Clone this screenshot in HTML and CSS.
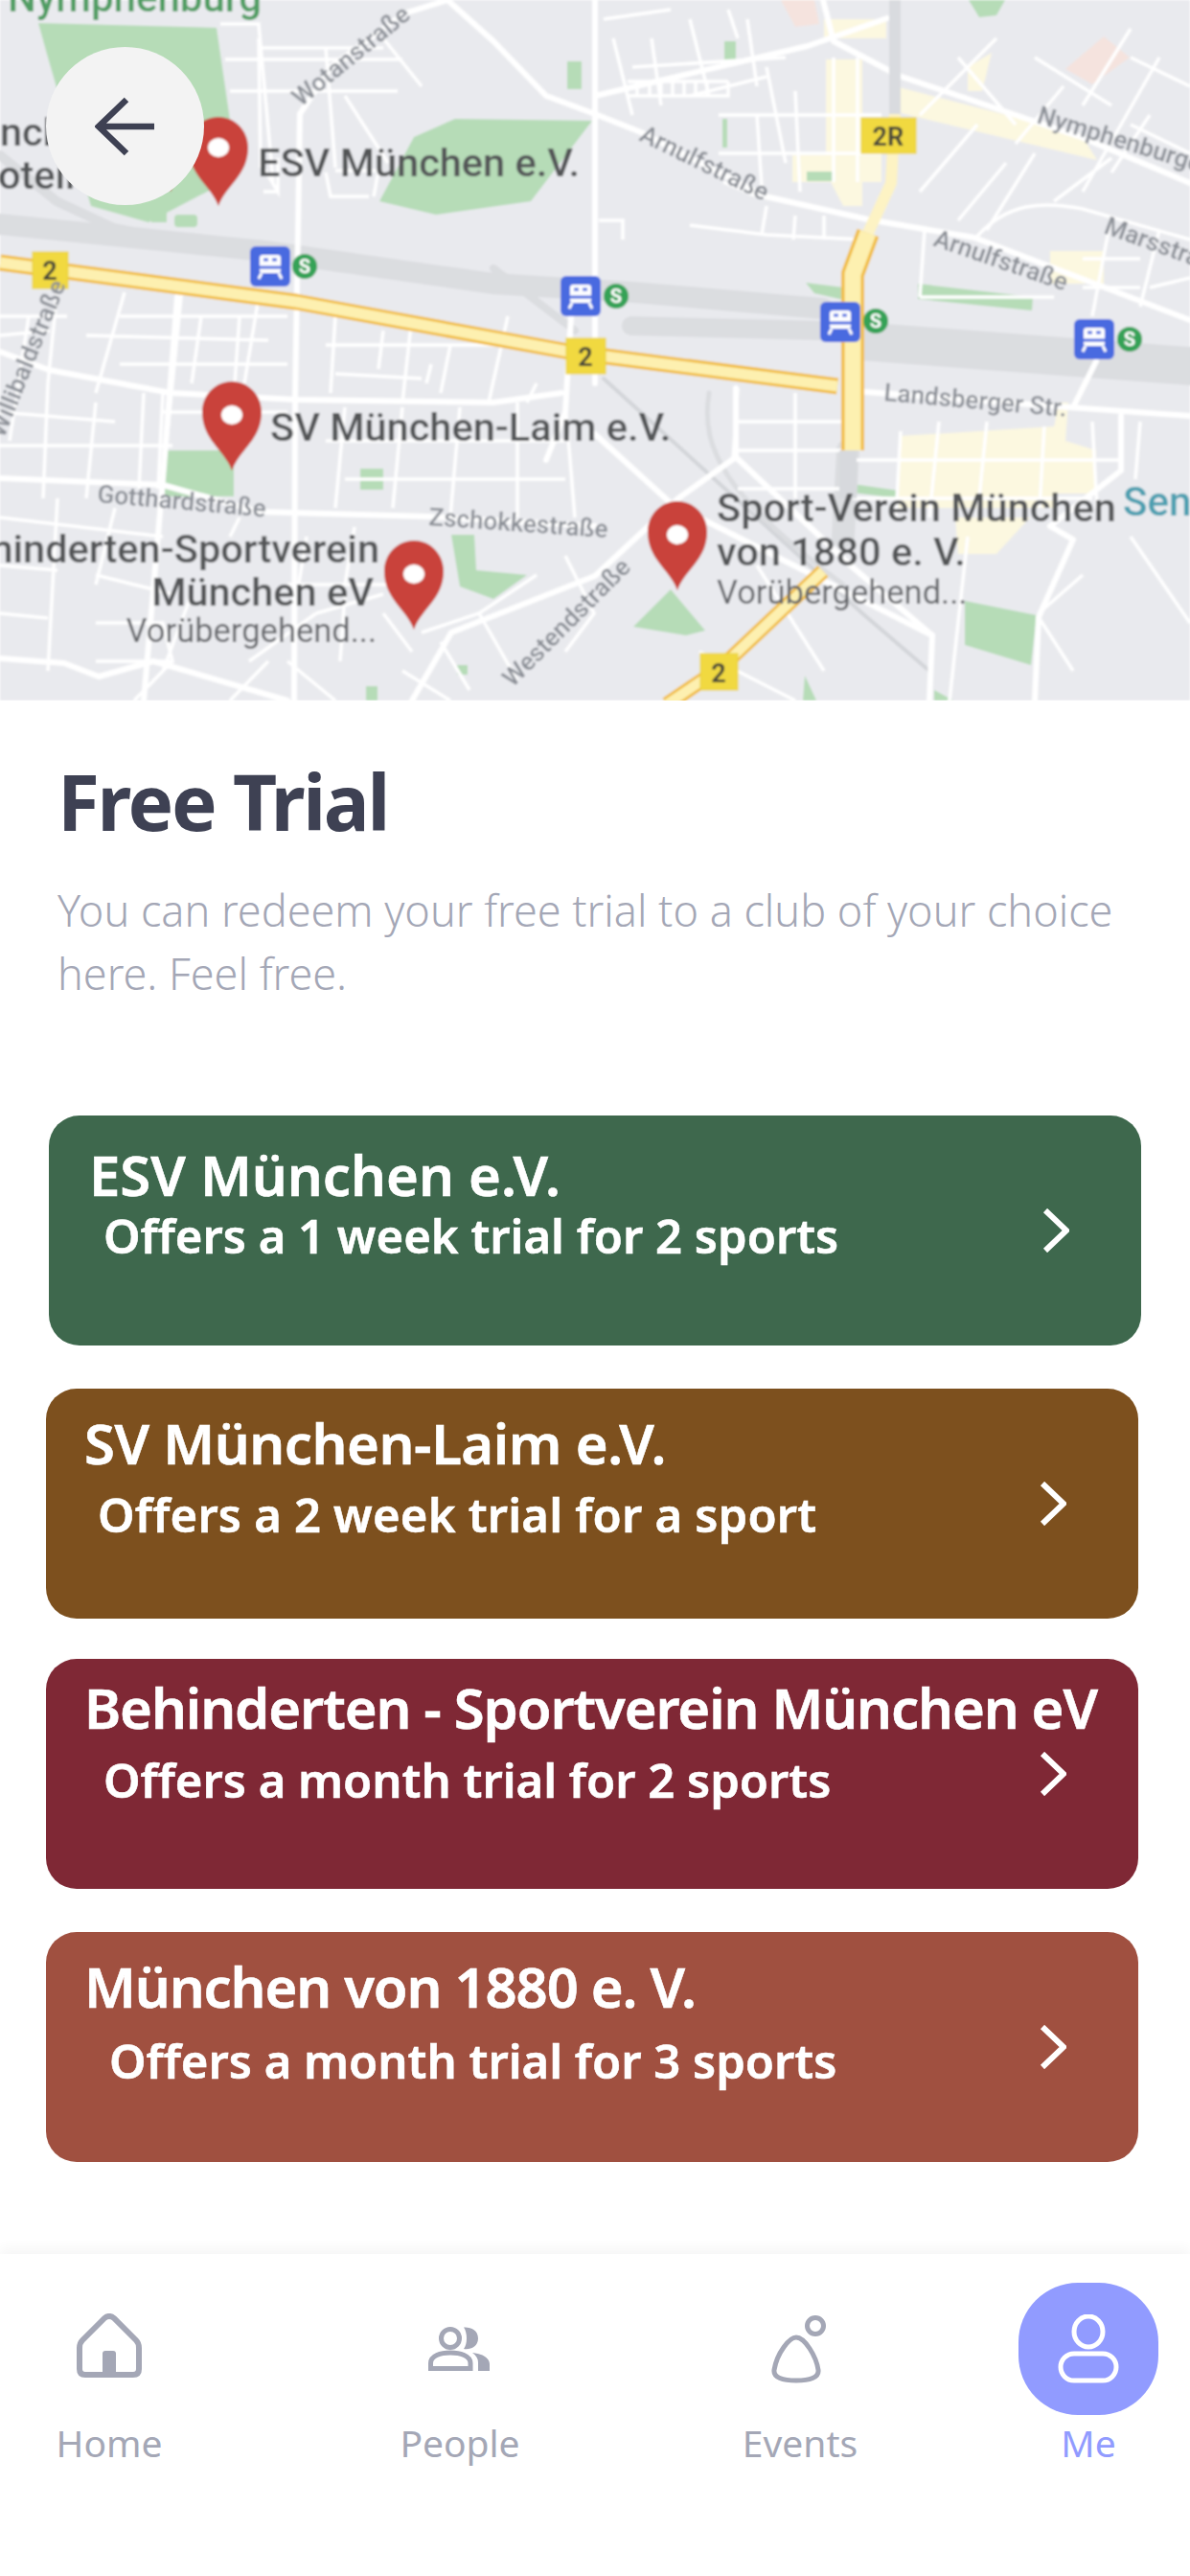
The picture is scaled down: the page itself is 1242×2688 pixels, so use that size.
FILE: index.html
```html
<!DOCTYPE html>
<html lang="en">
<head>
<meta charset="utf-8">
<title>Free Trial</title>
<link rel="stylesheet" href="styles.css">
</head>
<body>
<div class="page">
  <section class="map">
    <svg class="map-svg" viewBox="0 0 1242 731" width="1242" height="731" xmlns="http://www.w3.org/2000/svg">
      <defs>
        <filter id="soft" x="-2%" y="-2%" width="104%" height="104%"><feGaussianBlur stdDeviation="1.300"/></filter>
        <path id="pin" d="M0 0C-8 -22 -31 -32 -31 -61C-31 -79 -17 -93 0 -93C17 -93 31 -79 31 -61C31 -32 8 -22 0 0Z"/>
      </defs>
      <g filter="url(#soft)">
        <rect width="1242" height="731" fill="#e9eaee"/>
        <!-- special areas -->
        <g fill="#fcf8e0">
          <path d="M938 91L1128 140L1145 167L940 118Z"/>
          <path d="M862 62H900V215H880L862 180Z"/>
          <path d="M827 162H920V190H827Z"/>
          <path d="M860 20H925V40H860Z"/>
          <path d="M1096 262H1152V296H1096Z"/>
          <path d="M938 455L1100 445L1105 420L1115 420L1112 460L1144 470V515H1100V530H938Z"/>
          <path d="M997 540H1075L1040 578H1000Z"/>
          <path d="M1010 70L1035 55L1025 95H1010Z"/>
        </g>
        <g fill="#f5e3de">
          <path d="M815 0H850L855 25L830 28Z"/>
          <path d="M1112 72L1152 38L1179 60L1140 88Z"/>
        </g>
        <g fill="#b6dcb7">
          <path d="M40 24L226 29L240 125L235 190L155 232L95 215L50 60Z"/>
          <rect x="158" y="210" width="16" height="22"/>
          <rect x="182" y="224" width="24" height="13" rx="4"/>
          <path d="M396 210L432 143L475 124L618 126L554 210L455 224Z"/>
          <rect x="592" y="64" width="15" height="29"/>
          <rect x="172" y="470" width="72" height="48"/>
          <rect x="376" y="489" width="24" height="22"/>
          <path d="M471 558H495L497 595L550 600L515 625L480 612Z"/>
          <rect x="477" y="694" width="11" height="10"/>
          <rect x="382" y="716" width="12" height="15"/>
          <rect x="756" y="43" width="12" height="25"/>
          <rect x="754" y="124" width="5" height="30"/>
          <rect x="842" y="179" width="28" height="10"/>
          <path d="M841 295L881 300V313L850 306Z"/>
          <path d="M958 296L1078 310L1077 324L958 312Z"/>
          <path d="M1007 627L1082 642L1076 694L1007 673Z"/>
          <path d="M700 615L736 658L716 663L661 654Z"/>
          <path d="M890 505L938 512V520L890 514Z"/>
          <path d="M1011 0H1049L1040 16L1022 18Z"/>
          <path d="M840 705L852 731H838Z"/>
          <path d="M975 720L995 731H975Z"/>
        </g>
        <!-- rail -->
        <g fill="none" stroke="#dbdde0" stroke-linecap="round">
          <path d="M0 234L277 262L515 296L661 305L859 322" stroke-width="22"/>
          <path d="M0 162L59 210L119 238L277 268" stroke-width="10"/>
          <path d="M659 340L859 345" stroke-width="20"/>
          <path d="M898 356L1242 382" stroke-width="40"/>
          <path d="M515 280L600 345" stroke-width="8"/>
          <path d="M630 395L900 640L970 700" stroke-width="4" stroke="#d3d5d9"/>
          <path d="M740 410C730 470 760 520 880 610" stroke-width="5"/>
          <path d="M885 470L880 560" stroke-width="24"/>
        </g>
        <!-- thin grid -->
        <g fill="none" stroke="#fff" stroke-width="3.500">
          <path d="M230 25L270 25L285 190M270 50H400M235 62H420M240 95H415M270 40L272 175M340 50L350 175M400 40L440 90M360 100L405 170M350 178H395L390 205M275 175L290 200V165M290 200H275M340 180L345 205H385"/>
          <path d="M0 330H70M0 350L52 345M60 300L50 400M30 330L10 460M130 305L100 410M190 300L170 500M125 330H300M125 380H300M90 350L280 355M210 330L200 400M250 330L245 400M270 310L255 400"/>
          <path d="M350 330L345 410M430 330L420 420M530 330L510 420M340 360H590M350 390L440 395M400 345L395 385M470 360L460 410M560 400L550 420M450 380L445 400"/>
          <path d="M0 430L120 440M0 465H180M50 400L45 520M100 420L90 520M150 410L145 510M240 420L230 470M300 430H170M170 410L165 510M360 425L350 530M420 425L410 530M480 425L470 540M340 460H590M360 500H590M540 420V540M590 420L600 540"/>
          <path d="M0 540L170 560M0 590L60 595M60 520L50 700M120 530L100 610M100 600L180 620M250 540L240 560M200 620L170 700M0 640L50 645M100 650H170L180 690L100 690M260 690L330 640M330 640L400 620M320 560L310 620M370 550L360 610M300 610H430M360 620L355 690M400 640L430 680M300 690L350 731M140 731L180 690M240 731L280 690M440 660L500 640L560 600M500 640L540 710M460 670L490 720M420 700L470 731M590 580L620 640L590 680"/>
          <path d="M630 20L700 10M640 40L660 120M680 40L690 110M720 20L740 100M780 20L790 90M760 10L770 40M660 70L820 60M800 70L820 170M720 100L800 80"/>
          <path d="M655 85H760M655 100H760V85M665 85V100M678 85V100M690 85V100M702 85V100M714 85V100M726 85V100M738 85V100"/>
          <path d="M750 120H920M750 160H920M790 120L795 195M830 95L835 200M870 60V190M895 60V190M755 190L790 205M720 235L800 245L900 250M800 215L795 245M830 225L828 250M860 225V250M625 230H650V250"/>
          <path d="M960 120L1040 40M1000 60L1060 130M1080 60L1160 110M1110 90L1060 150M960 200L1020 130M1050 170L1000 230M1080 160L1030 240M1130 110L1180 30M1180 60L1242 90M1180 130L1242 160M1200 120L1160 180M1130 200L1210 60M1100 210L1160 165"/>
          <path d="M1017 250C1050 210 1090 210 1130 218L1242 250M1160 225L1140 330M1210 240L1190 320M1130 270H1190M1130 300H1190M965 240L960 310M960 310H1100"/>
          <path d="M770 440H890M770 470H890M770 510H890M830 410V520M770 405L765 480M890 480H940M940 450L935 540M980 440L970 540M1030 440L1020 540M1090 445L1085 530M1140 440L1145 530M1190 440L1185 500M940 480H1170M940 520H1140M890 520H1000"/>
          <path d="M1180 560L1242 650M1130 600L1084 640M990 740L1010 560"/>
          <path d="M1200 300L1242 290M1084 644L1120 700M730 680L830 731M790 590L860 700"/>
        </g>
        <!-- main roads -->
        <g fill="none" stroke="#fff" stroke-width="6" stroke-linejoin="round" stroke-linecap="round">
          <path d="M307 731L308 415L311 240L313 119L345 70L422 14L467 0L515 43L570 100L621 119"/>
          <path d="M0 367L51 386L178 410L309 417L515 420L586 410"/>
          <path d="M0 499L170 506L270 534L447 539L621 549"/>
          <path d="M0 687L67 692L103 706M103 706L160 690L300 731"/>
          <path d="M185 310L170 500L150 731"/>
          <path d="M596 330L590 430L570 480"/>
          <path d="M621 119L669 138L799 205L906 229L1017 248L1242 334"/>
          <path d="M621 100L843 48L926 19"/>
          <path d="M859 0L870 43L938 79L1128 143L1242 191"/>
          <path d="M890 408L1116 425L1242 434"/>
          <path d="M1144 377L1120 425M1170 434V491L1096 549"/>
          <path d="M621 453L700 525L973 663L970 731"/>
          <path d="M768 405V477L708 520L621 601L471 660L430 731"/>
          <path d="M768 477L890 592L973 663"/>
          <path d="M1084 644L1120 563L1096 549M1084 644L1080 731"/>
          <path d="M621 0V400"/>
        </g>
        <!-- motorway -->
        <g fill="none" stroke-linejoin="round" stroke-linecap="butt">
          <path d="M0 274L309 315L594 367L874 403" stroke="#f1bd42" stroke-width="17"/>
          <path d="M890 470L890 286L906 243" stroke="#f1bd42" stroke-width="24"/>
          <path d="M859 596L752 697L696 735" stroke="#f1bd42" stroke-width="16"/>
          <path d="M0 274L309 315L594 367L874 403" stroke="#fdf0b0" stroke-width="11"/>
          <path d="M890 470L890 286L906 243" stroke="#fdf0b0" stroke-width="17"/>
          <path d="M906 243L930 191L934 119" stroke="#fdf3c4" stroke-width="12"/>
          <path d="M859 596L752 697L696 735" stroke="#fdf0b0" stroke-width="10"/>
          <path d="M934 119V0" stroke="#d9dbdf" stroke-width="12"/>
          <path d="M885 470V520" stroke="#d7d9dd" stroke-width="18"/>
        </g>
        <!-- shields -->
        <g class="shield">
          <rect x="34" y="263" width="37" height="38"/>
          <rect x="591" y="353" width="41" height="37"/>
          <rect x="899" y="123" width="57" height="37"/>
          <rect x="731" y="682" width="39" height="38"/>
        </g>
        <g class="shield-text">
          <text x="52" y="292">2</text>
          <text x="611" y="382">2</text>
          <text x="927" y="152">2R</text>
          <text x="750" y="712">2</text>
        </g>
        <!-- stations -->
        <g id="stations">
          <g class="station">
            <rect x="261" y="257" width="42" height="42" rx="6"/>
            <rect class="st-w" x="271" y="266" width="22" height="19" rx="3"/>
            <path class="st-l" d="M275 271H280M284 271H289M270 279H294"/>
            <path class="st-w2" d="M273 285L270 291M291 285L294 291"/>
            <circle class="st-s" cx="318" cy="278" r="13"/><text class="st-t" x="318" y="285">S</text>
          </g>
          <g class="station">
            <rect x="585" y="288" width="42" height="42" rx="6"/>
            <rect class="st-w" x="595" y="297" width="22" height="19" rx="3"/>
            <path class="st-l" d="M599 302H604M608 302H613M594 310H618"/>
            <path class="st-w2" d="M597 316L594 322M615 316L618 322"/>
            <circle class="st-s" cx="643" cy="309" r="13"/><text class="st-t" x="643" y="316">S</text>
          </g>
          <g class="station">
            <rect x="856" y="315" width="42" height="42" rx="6"/>
            <rect class="st-w" x="866" y="324" width="22" height="19" rx="3"/>
            <path class="st-l" d="M870 329H875M879 329H884M865 337H889"/>
            <path class="st-w2" d="M868 343L865 349M886 343L889 349"/>
            <circle class="st-s" cx="914" cy="335" r="13"/><text class="st-t" x="914" y="342">S</text>
          </g>
          <g class="station">
            <rect x="1121" y="333" width="42" height="42" rx="6"/>
            <rect class="st-w" x="1131" y="342" width="22" height="19" rx="3"/>
            <path class="st-l" d="M1135 347H1140M1144 347H1149M1130 355H1154"/>
            <path class="st-w2" d="M1133 361L1130 367M1151 361L1154 367"/>
            <circle class="st-s" cx="1179" cy="354" r="13"/><text class="st-t" x="1179" y="361">S</text>
          </g>
        </g>
        <!-- street labels -->
        <g class="street">
          <text transform="translate(314 112) rotate(-39)">Wotanstraße</text>
          <text transform="translate(4 458) rotate(-68)">Willibaldstraße</text>
          <text transform="translate(101 524) rotate(5)">Gotthardstraße</text>
          <text transform="translate(447 548) rotate(4)">Zschokkestraße</text>
          <text transform="translate(535 718) rotate(-45)">Westendstraße</text>
          <text transform="translate(666 146) rotate(26)">Arnulfstraße</text>
          <text transform="translate(973 256) rotate(19)">Arnulfstraße</text>
          <text transform="translate(1081 128) rotate(17)">Nymphenburger</text>
          <text transform="translate(1151 243) rotate(20)">Marsstraße</text>
          <text transform="translate(922 418) rotate(5)">Landsberger Str.</text>
        </g>
        <text class="park-name" x="8" y="12">Nymphenburg</text>
        <text class="teal" x="1172" y="538">Sen</text>
        <!-- place labels -->
        <g class="place">
          <text x="0" y="152">nch</text>
          <text x="-2" y="197">otein</text>
          <text x="269" y="184">ESV München e.V.</text>
          <text x="282" y="460">SV München-Laim e.V.</text>
          <text class="end" x="396" y="587">Behinderten-Sportverein</text>
          <text class="end" x="390" y="632">München eV</text>
          <text class="sub end" x="393" y="670">Vorübergehend...</text>
          <text x="748" y="544">Sport-Verein München</text>
          <text x="748" y="590">von 1880 e. V.</text>
          <text class="sub" x="748" y="630">Vorübergehend...</text>
        </g>
        <!-- pins -->
        <g class="pin">
          <g transform="translate(178 200)"><use href="#pin"/></g>
          <g transform="translate(228 215)"><use href="#pin"/><ellipse class="hole" cx="0" cy="-61" rx="11" ry="10"/></g>
          <g transform="translate(242 491)"><use href="#pin"/><ellipse class="hole" cx="0" cy="-58" rx="11" ry="10"/></g>
          <g transform="translate(432 657)"><use href="#pin"/><ellipse class="hole" cx="0" cy="-58" rx="11" ry="10"/></g>
          <g transform="translate(707 616)"><use href="#pin"/><ellipse class="hole" cx="0" cy="-58" rx="11" ry="10"/></g>
        </g>
      </g>
    </svg>
    <button class="back" type="button" aria-label="Back">
      <svg width="64" height="62" viewBox="0 0 64 62"><path d="M62 31H4M33 3L4 31L33 59" fill="none" stroke="#3e4153" stroke-width="6.500"/></svg>
    </button>
  </section>

  <header class="intro">
    <h1 class="title">Free Trial</h1>
    <p class="lead">You can redeem your free trial to a club of your choice here. Feel free.</p>
  </header>

  <main class="cards">
    <a class="card card-green">
      <div class="card-text">
        <div class="card-title">ESV München e.V.</div>
        <div class="card-sub sub-a">Offers a 1 week trial for 2 sports</div>
      </div>
      <svg class="chev" viewBox="0 0 28 46"><path d="M3 2L25 23L3 44" /></svg>
    </a>
    <a class="card card-brown">
      <div class="card-text">
        <div class="card-title">SV München-Laim e.V.</div>
        <div class="card-sub sub-b">Offers a 2 week trial for a sport</div>
      </div>
      <svg class="chev" viewBox="0 0 28 46"><path d="M3 2L25 23L3 44" /></svg>
    </a>
    <a class="card card-wine">
      <div class="card-text">
        <div class="card-title">Behinderten - Sportverein München eV</div>
        <div class="card-sub sub-c">Offers a month trial for 2 sports</div>
      </div>
      <svg class="chev" viewBox="0 0 28 46"><path d="M3 2L25 23L3 44" /></svg>
    </a>
    <a class="card card-rust">
      <div class="card-text">
        <div class="card-title">München von 1880 e. V.</div>
        <div class="card-sub sub-d">Offers a month trial for 3 sports</div>
      </div>
      <svg class="chev" viewBox="0 0 28 46"><path d="M3 2L25 23L3 44" /></svg>
    </a>
  </main>

  <nav class="tabs">
    <a class="tab tab-home">
      <span class="tab-icon">
        <svg class="home-svg" width="70" height="68" viewBox="0 0 70 68"><path d="M30 5L7 28Q4 31 4 36V58Q4 64 10 64H60Q66 64 66 58V36Q66 31 63 28L40 5Q35 1 30 5Z" fill="none" stroke="#a4a7b6" stroke-width="6"/><path d="M28 64V42Q28 39 31 39H39Q42 39 42 42V64Z" fill="#a4a7b6"/></svg>
      </span>
      <span class="tab-label">Home</span>
    </a>
    <a class="tab tab-people">
      <span class="tab-icon">
        <svg width="66" height="46" viewBox="0 0 66 46"><ellipse cx="23" cy="12" rx="9.500" ry="9.500" fill="none" stroke="#a4a7b6" stroke-width="5"/><path d="M37 0.500C44 0 52 3 52 12C52 21 44 24 37 23C41 18 41 6 37 0.500Z" fill="#a4a7b6"/><path d="M2.500 43.500V38C2.500 30 13 27 23 27C33 27 44 30 44 38V43.500Z" fill="none" stroke="#a4a7b6" stroke-width="5"/><path d="M46 27C56 28 64 32 64 39V46H52V37C52 33 50 30 46 27Z" fill="#a4a7b6"/></svg>
      </span>
      <span class="tab-label">People</span>
    </a>
    <a class="tab tab-events">
      <span class="tab-icon">
        <svg width="60" height="72" viewBox="0 0 60 72"><ellipse cx="46" cy="12" rx="8.500" ry="8.500" fill="none" stroke="#a4a7b6" stroke-width="5"/><path d="M26 24C19 24 6 40 3 58C2 66 12 69 26 69C40 69 50 66 49 58C47 44 35 24 26 24Z" fill="none" stroke="#a4a7b6" stroke-width="5"/></svg>
      </span>
      <span class="tab-label">Events</span>
    </a>
    <a class="tab tab-me">
      <span class="tab-icon tab-icon-active">
        <svg width="64" height="72" viewBox="0 0 64 72"><ellipse cx="32" cy="18" rx="15" ry="16" fill="none" stroke="#fff" stroke-width="5"/><rect x="3" y="41" width="58" height="28" rx="14" fill="none" stroke="#fff" stroke-width="5"/></svg>
      </span>
      <span class="tab-label tab-label-active">Me</span>
    </a>
  </nav>
</div>
</body>
</html>
```

FILE: styles.css
```css
* { box-sizing: border-box; }
html, body { margin: 0; padding: 0; background: #fff; }
.page {
  width: 1242px;
  height: 2688px;
  overflow: hidden;
  display: flex;
  flex-direction: column;
  font-family: "Noto Sans", "Open Sans", sans-serif;
}

/* map */
.map { position: relative; height: 731px; flex: none; overflow: hidden; }
.map-svg { display: block; }
.back {
  position: absolute;
  left: 48px;
  top: 49px;
  width: 165px;
  height: 165px;
  border: 0;
  padding: 0;
  border-radius: 50%;
  background: #f3f3f3;
  display: flex;
  align-items: center;
  justify-content: center;
}
.shield rect { fill: #f1d93f; stroke: #e8cf3a; stroke-width: 1; }
.shield-text text { font: 700 27px Roboto, sans-serif; fill: #4a4a3a; text-anchor: middle; }
.station > rect:first-child { fill: #4a6be0; }
.st-w { fill: #fff; }
.st-l { stroke: #4a6be0; stroke-width: 3; fill: none; }
.st-w2 { stroke: #fff; stroke-width: 3; fill: none; }
.st-s { fill: #34a257; }
.st-t { font: 700 20px Roboto, sans-serif; fill: #fff; text-anchor: middle; }
.street text { font: 500 26px Roboto, sans-serif; fill: #8b8f96; }
.park-name { font: 500 42px Roboto, sans-serif; fill: #4f9d62; }
.teal { font: 500 42px Roboto, sans-serif; fill: #4b9fb0; }
.place text { font: 500 41.500px Roboto, sans-serif; fill: #525457; }
.place .sub { font-size: 34.500px; font-weight: 400; fill: #66686c; }
.place .end { text-anchor: end; }
.pin { fill: #c9433a; }
.hole { fill: #fff; }

/* intro */
.intro { padding: 55px 60px 0; flex: none; }
.title {
  margin: 0;
  font-size: 80px;
  line-height: 100px;
  font-weight: 700;
  letter-spacing: -2.300px;
  color: #3e4153;
}
.lead {
  margin: 31px 0 0;
  font-size: 45px;
  line-height: 66px;
  font-weight: 300;
  color: #a4a7b6;
}

/* cards */
.cards {
  flex: 1;
  display: flex;
  flex-direction: column;
  padding-top: 115px;
}
.card {
  width: 1140px;
  height: 240px;
  margin-left: 48px;
  border-radius: 32px;
  color: #fff;
  display: flex;
  align-items: center;
  justify-content: space-between;
  padding: 0 75px 0 40px;
}
.card-text { align-self: flex-start; flex: 1; min-width: 0; }
.card-title { font-size: 58px; line-height: 72px; font-weight: 600; white-space: nowrap; -webkit-text-stroke: 0.6px #fff; }
.card-sub { font-size: 49px; line-height: 60px; font-weight: 600; white-space: nowrap; -webkit-text-stroke: 0.6px #fff; }
.card-green { background: #3e684d; margin-left: 51px; padding-left: 42px; }
.card-brown { background: #7d501e; margin-top: 45px; }
.card-wine { background: #7f2835; margin-top: 42px; }
.card-rust { background: #a05040; margin-top: 45px; }
.card-green .card-text { padding-top: 26px; }
.card-brown .card-text { padding-top: 21px; }
.card-wine .card-text { padding-top: 15px; }
.card-rust .card-text { padding-top: 21px; }
.card-brown .card-title { letter-spacing: -0.450px; }
.card-wine .card-title { letter-spacing: -1.100px; }
.card-rust .card-title { letter-spacing: -1.100px; }
.sub-a { margin: -3px 0 0 15px; }
.sub-b { margin: 8px 0 0 14px; letter-spacing: 0.200px; }
.sub-c { margin: 9px 0 0 20px; }
.sub-d { margin: 11px 0 0 26px; }
.chev { width: 28px; height: 46px; flex: none; }
.chev path { fill: none; stroke: #fff; stroke-width: 6; }

/* tabs */
.tabs {
  flex: none;
  height: 336px;
  background: #fff;
  display: flex;
  padding-top: 30px;
  box-shadow: 0 -6px 12px rgba(0, 0, 0, 0.04);
}
.tab { width: 146px; display: flex; flex-direction: column; align-items: center; }
.tab-home { margin-left: 41px; }
.tab-people { margin-left: 220px; }
.tab-events { margin-left: 209px; }
.tab-me { margin-left: 155px; }
.tab-icon {
  width: 146px;
  height: 138px;
  display: flex;
  align-items: center;
  justify-content: center;
}
.home-svg { margin-bottom: 6px; }
.tab-icon-active { background: #919bff; border-radius: 62px; }
.tab-label { font-size: 39px; line-height: 52px; margin-top: 3px; color: #a4a7b6; }
.tab-label-active { color: #919bff; }
```
